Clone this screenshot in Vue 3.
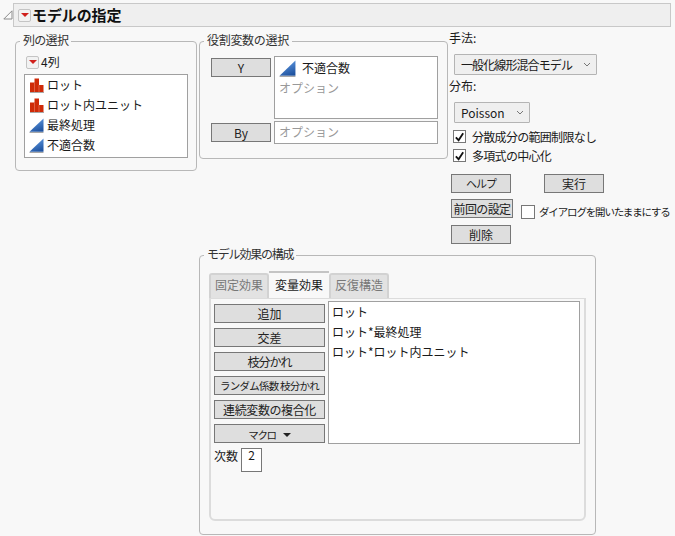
<script setup>
const columns = [
  { name: 'ロット', type: 'bar' },
  { name: 'ロット内ユニット', type: 'bar' },
  { name: '最終処理', type: 'tri' },
  { name: '不適合数', type: 'tri' },
]
const tabs = ['固定効果', '変量効果', '反復構造']
const actions = [
  { label: '追加', cls: '' },
  { label: '交差', cls: '' },
  { label: '枝分かれ', cls: 'tight' },
  { label: 'ランダム係数 枝分かれ', cls: 'narrow' },
  { label: '連続変数の複合化', cls: 'slight' },
]
const effects = ['ロット', 'ロット*最終処理', 'ロット*ロット内ユニット']
const options = ['分散成分の範囲制限なし', '多項式の中心化']
</script>

<template>
  <div class="page">
    <svg class="disclosure" width="10" height="10" viewBox="0 0 10 10">
      <path d="M9 .8V9H.8Z" fill="#fafafa" stroke="#8a8a8a" />
    </svg>
    <header class="title-bar">
      <span class="menu-btn"><i class="red-down"></i></span>
      <h1>モデルの指定</h1>
    </header>

    <div class="top-row">
      <section class="group col-group">
        <span class="legend col-legend">列の選択</span>
        <div class="count"><span class="menu-btn"><i class="red-down"></i></span>4列</div>
        <ul class="list col-list">
          <li v-for="c in columns" :key="c.name">
            <svg v-if="c.type === 'bar'" class="ico" width="15" height="15" viewBox="0 0 15 15">
              <path d="M1 14.500h14" stroke="#a8a8a8" />
              <path d="M1 4.500h4.500V14H1zM5.500 .5H10V14H5.500zM10 7h4.500v7H10z" fill="#cf2a08" />
              <path d="M5.500 4.500V14M10 7v7" stroke="#e8775c" stroke-width=".7" />
            </svg>
            <svg v-else class="ico" width="15" height="15" viewBox="0 0 15 15">
              <defs>
                <linearGradient :id="'g' + c.name" x1="0.4" y1="0" x2="0.8" y2="1">
                  <stop offset="0" stop-color="#5f9ae2" />
                  <stop offset="1" stop-color="#1c4f9c" />
                </linearGradient>
              </defs>
              <path d="M14.500 .5V13.800H.5Z" :fill="'url(#g' + c.name + ')'" />
              <path d="M.5 14.500h14" stroke="#a8a8a8" />
            </svg>
            {{ c.name }}
          </li>
        </ul>
      </section>

      <section class="group role-group">
        <span class="legend role-legend">役割変数の選択</span>
        <div class="role-row">
          <button class="btn role-btn">Y</button>
          <div class="list role-y">
            <div class="role-item">
              <svg class="ico" width="17" height="17" viewBox="0 0 15 15">
                <defs>
                  <linearGradient id="gy" x1="0.4" y1="0" x2="0.8" y2="1">
                    <stop offset="0" stop-color="#5f9ae2" />
                    <stop offset="1" stop-color="#1c4f9c" />
                  </linearGradient>
                </defs>
                <path d="M14.500 .5V13.800H.5Z" fill="url(#gy)" />
                <path d="M.5 14.500h14" stroke="#a8a8a8" />
              </svg>
              不適合数
            </div>
            <div class="placeholder">オプション</div>
          </div>
        </div>
        <div class="role-row by-row">
          <button class="btn role-btn">By</button>
          <div class="list role-by"><span class="placeholder">オプション</span></div>
        </div>
      </section>

      <aside class="side">
        <div class="side-label">手法:</div>
        <div class="select method"><span class="method-text">一般化線形混合モデル</span>
          <svg width="8" height="5" viewBox="0 0 8 5"><path d="M1 1l3 3 3-3" fill="none" stroke="#777" /></svg>
        </div>
        <div class="side-label dist">分布:</div>
        <div class="select poisson">Poisson
          <svg width="8" height="5" viewBox="0 0 8 5"><path d="M1 1l3 3 3-3" fill="none" stroke="#777" /></svg>
        </div>
        <label v-for="o in options" :key="o" class="check-row">
          <span class="box">
            <svg width="12" height="12" viewBox="0 0 12 12"><path d="M2 6.500l3 3 5-7.500" fill="none" stroke="#111" stroke-width="2" /></svg>
          </span>
          <span class="check-text">{{ o }}</span>
        </label>
        <div class="action-row first">
          <button class="btn act kana">ヘルプ</button>
          <button class="btn act run">実行</button>
        </div>
        <div class="action-row">
          <button class="btn prev">前回の設定</button>
          <label class="keep"><span class="box empty"></span><span class="keep-text">ダイアログを開いたままにする</span></label>
        </div>
        <div class="action-row">
          <button class="btn act">削除</button>
        </div>
      </aside>
    </div>

    <section class="group model-group">
      <span class="legend model-legend">モデル効果の構成</span>
      <div class="tabs">
        <div v-for="(t, i) in tabs" :key="t" class="tab" :class="{ active: i === 1 }">{{ t }}</div>
      </div>
      <div class="panel">
        <div class="panel-left">
          <button v-for="a in actions" :key="a.label" class="btn effect" :class="a.cls">{{ a.label }}</button>
          <button class="btn effect macro"><span class="macro-text">マクロ</span><i class="black-down"></i></button>
          <div class="degree">
            <span class="degree-label">次数</span>
            <span class="degree-box">2</span>
          </div>
        </div>
        <ul class="list effect-list">
          <li v-for="e in effects" :key="e">{{ e }}</li>
        </ul>
      </div>
    </section>
  </div>
</template>

<style scoped>
.page {
  position: relative;
  width: 675px;
  height: 536px;
  padding-top: 3px;
  box-sizing: border-box;
  overflow: hidden;
  background: #f8f8f8;
  color: #1a1a1a;
  font: 12px/16px "Noto Sans CJK JP", "Liberation Sans", sans-serif;
}
ul { margin: 0; padding: 0; list-style: none; }
.disclosure { position: absolute; left: 3px; top: 10px; }
.title-bar {
  display: flex;
  align-items: center;
  height: 24px;
  margin-left: 13px;
  width: 658px;
  box-sizing: border-box;
  padding-left: 4px;
  background: #efefef;
  border: 1px solid #c8c8c8;
}
h1 { margin: 0 0 0 1px; font-size: 15px; font-weight: 700; color: #111; letter-spacing: -0.1px; }
.menu-btn {
  display: inline-flex;
  align-items: center;
  justify-content: center;
  width: 13px;
  height: 13px;
  box-sizing: border-box;
  border: 1px solid #c4c4c4;
  border-radius: 2px;
  background: #f2f2f2;
}
.red-down {
  width: 0;
  height: 0;
  border: 4px solid transparent;
  border-top: 4px solid #d0201c;
  border-bottom: 0;
}
.top-row { display: flex; align-items: flex-start; margin: 3px 0 0 15px; height: 213px; }
.group {
  position: relative;
  box-sizing: border-box;
  border: 1px solid #b8b8b8;
  border-radius: 4px;
}
.legend {
  position: absolute;
  top: -10px;
  left: 4px;
  padding: 0 3px;
  background: #f8f8f8;
  color: #333;
}
.col-legend { letter-spacing: -0.7px; }
.role-legend { letter-spacing: -0.3px; }
.model-legend { letter-spacing: -1.2px; }
.col-group { width: 182px; height: 130px; margin-top: 11px; padding: 13px 8px 0; }
.count { display: flex; align-items: center; gap: 2px; height: 14px; margin-left: 2px; }
.list { box-sizing: border-box; background: #fff; border: 1px solid #a0a0a0; }
.col-list { height: 84px; margin-top: 5px; }
.col-list li { display: flex; align-items: center; gap: 3px; height: 20px; padding-left: 4px; }
.role-group { width: 249px; height: 118px; margin: 11px 0 0 2px; padding: 14px 0 0 11px; }
.role-row { display: flex; align-items: flex-start; gap: 3px; }
.by-row { margin-top: 2px; }
.btn {
  box-sizing: border-box;
  height: 19px;
  padding: 0;
  border: 1px solid #777;
  background: #dedede;
  color: #222;
  font: inherit;
  line-height: 15px;
  white-space: nowrap;
}
.role-btn { width: 60px; margin-top: 2px; }
.role-y { width: 164px; height: 63px; padding: 1px 0 0 4px; }
.role-item { display: flex; align-items: center; gap: 6px; height: 20px; }
.placeholder { color: #999; line-height: 20px; }
.role-by { width: 164px; height: 23px; padding-left: 4px; }
.side { margin-left: 1px; width: 226px; }
.side-label { height: 16px; }
.side-label.dist { margin-top: 3px; }
.select {
  display: flex;
  align-items: center;
  justify-content: space-between;
  box-sizing: border-box;
  height: 21px;
  margin: 8px 0 0 5px;
  padding: 0 5px 0 6px;
  background: #efefef;
  border: 1px solid #b4b4b4;
  border-radius: 1px;
}
.method { width: 143px; }
.method-text { letter-spacing: -0.9px; }
.poisson { width: 76px; }
.check-row { display: flex; align-items: center; gap: 6px; height: 13px; margin: 6px 0 0 4px; }
.select + .check-row { margin-top: 7px; }
.check-text { letter-spacing: -0.7px; white-space: nowrap; }
.box {
  display: flex;
  align-items: center;
  justify-content: center;
  box-sizing: border-box;
  width: 13px;
  height: 13px;
  background: #fff;
  border: 1px solid #777;
}
.box.empty { width: 14px; height: 14px; }
.action-row { display: flex; align-items: flex-start; margin: 6px 0 0 2px; }
.action-row.first { margin-top: 12px; }
.act { width: 60px; }
.kana { font-size: 11px; letter-spacing: -1px; }
.run { margin-left: 33px; }
.prev { width: 62px; letter-spacing: -0.6px; }
.keep { display: flex; align-items: center; gap: 4px; margin: 6px 0 0 8px; height: 14px; white-space: nowrap; }
.keep-text { font-size: 10.500px; letter-spacing: -1.15px; }
.model-group {
  width: 397px;
  height: 280px;
  margin: 12px 0 0 199px;
  padding: 15px 0 0 9px;
}
.tabs { display: flex; align-items: flex-end; height: 27px; }
.tab {
  box-sizing: border-box;
  width: 60px;
  height: 25px;
  text-align: center;
  line-height: 20px;
  color: #777;
  background: #e2e2e2;
  border: 2px solid #d2d2d2;
  border-bottom: 0;
  border-radius: 3px 3px 0 0;
}
.tab.active {
  height: 27px;
  color: #1a1a1a;
  background: #f8f8f8;
  border-color: #c4c4c4 transparent transparent;
  border-width: 2px 0 0;
  border-radius: 0;
  line-height: 23px;
}
.panel {
  display: flex;
  align-items: flex-start;
  gap: 3px;
  box-sizing: border-box;
  width: 377px;
  height: 223px;
  padding: 2px 0 0 3px;
  border: 2px solid #dcdcdc;
  border-top: 1px solid #dcdcdc;
  border-radius: 0 0 6px 6px;
}
.panel-left { display: flex; flex-direction: column; gap: 5px; width: 111px; padding-top: 3px; }
.effect { width: 111px; }
.tight { letter-spacing: -1px; }
.slight { letter-spacing: -0.4px; }
.narrow { font-size: 10.500px; letter-spacing: -0.75px; }
.macro-text { font-size: 10.500px; letter-spacing: -1.4px; }
.black-down {
  display: inline-block;
  vertical-align: 2px;
  margin-left: 7px;
  border: 4px solid transparent;
  border-top: 4px solid #222;
  border-bottom: 0;
}
.degree { display: flex; align-items: flex-start; gap: 3px; }
.degree-label { line-height: 16px; }
.degree-box {
  box-sizing: border-box;
  width: 21px;
  height: 24px;
  background: #fff;
  border: 1px solid #777;
  text-align: center;
  line-height: 12px;
}
.effect-list { width: 252px; height: 143px; padding: 0 0 0 3px; }
.effect-list li { height: 20px; line-height: 20px; }
</style>
